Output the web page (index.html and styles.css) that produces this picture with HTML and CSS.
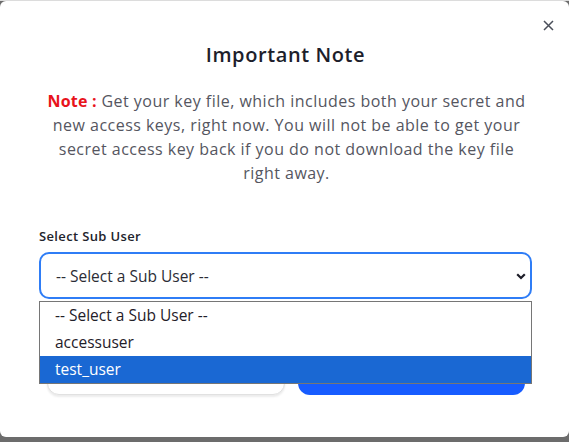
FILE: index.html
```html
<!DOCTYPE html>
<html>
<head>
<meta charset="utf-8">
<link rel="stylesheet" href="styles.css">
</head>
<body>
<div class="modal">
  <button class="close" aria-label="Close">
    <svg width="11" height="11" viewBox="0 0 11 11"><path d="M1 1L10 10M10 1L1 10" stroke="#4a4f5a" stroke-width="1.5" fill="none"/></svg>
  </button>
  <h2 class="title">Important Note</h2>
  <p class="note"><span class="note-label">Note :</span> Get your key file, which includes both your secret and new access keys, right now. You will not be able to get your secret access key back if you do not download the key file right away.</p>
  <label class="field-label">Select Sub User</label>
  <div class="select">
    <span>-- Select a Sub User --</span>
    <svg class="chev" width="10" height="7" viewBox="0 0 10 7"><path d="M1.2 1.2L5 5L8.8 1.2" stroke="#1d1d28" stroke-width="2.2" fill="none"/></svg>
  </div>
  <div class="actions">
    <button class="btn btn-outline">Cancel</button>
    <button class="btn btn-primary">Download</button>
  </div>
  <ul class="dropdown">
    <li>-- Select a Sub User --</li>
    <li>accessuser</li>
    <li class="active">test_user</li>
  </ul>
</div>
</body>
</html>
```
FILE: styles.css
```css
html, body {
  margin: 0;
  padding: 0;
}
body {
  width: 569px;
  height: 442px;
  background: linear-gradient(#dcdcdc 0 1px, #6c6c6c 1px);
  font-family: "Open Sans", "Noto Sans", sans-serif;
  overflow: hidden;
}
.modal {
  position: relative;
  margin-top: 1px;
  height: 436px;
  background: #fff;
  border-radius: 6px;
  padding: 0 37px 0 39px;
  box-sizing: border-box;
  display: flex;
  flex-direction: column;
}
.close {
  position: absolute;
  top: 18px;
  right: 14px;
  width: 13px;
  height: 13px;
  padding: 1px;
  border: 0;
  background: none;
  display: flex;
  align-items: center;
  justify-content: center;
}
.title {
  margin: 39px 0 0;
  text-align: center;
  font-size: 20px;
  font-weight: 600;
  letter-spacing: 0.6px;
  line-height: 30px;
  color: #1d1e2b;
}
.note {
  margin: 19px -2px 0 0;
  padding: 0;
  text-align: center;
  font-size: 16px;
  letter-spacing: 0.48px;
  line-height: 24px;
  color: #55565f;
}
.note-label {
  color: #e8131b;
  font-weight: 700;
  letter-spacing: 0.2px;
}
.field-label {
  margin-top: 42px;
  font-size: 13px;
  font-weight: 600;
  letter-spacing: 0.35px;
  line-height: 18px;
  color: #22232b;
}
.select {
  margin-top: 7px;
  height: 47px;
  box-sizing: border-box;
  border: 2px solid #2f7df6;
  border-radius: 10px;
  display: flex;
  align-items: center;
  justify-content: space-between;
  padding: 0 4px 0 15px;
  font-size: 15.5px;
  color: #2b2c35;
}
.chev {
  margin-top: 1px;
}
.actions {
  margin: 52px 7px 0 8px;
  display: flex;
  gap: 13px;
}
.btn {
  height: 44px;
  border-radius: 12px;
  font-family: inherit;
  font-size: 15px;
  font-weight: 600;
}
.btn-outline {
  width: 238px;
  background: #fff;
  border: 1px solid #e1e1e1;
  box-shadow: 0 2px 2px rgba(0,0,0,0.08);
  color: #333;
}
.btn-primary {
  flex: 1;
  background: #175cff;
  border: 0;
  color: #fff;
}
.dropdown {
  position: absolute;
  top: 300px;
  left: 39px;
  width: 493px;
  margin: 0;
  padding: 0;
  list-style: none;
  background: #fff;
  border: 1px solid #767676;
  box-sizing: border-box;
  font-size: 15.5px;
  color: #1f2029;
}
.dropdown li {
  height: 27px;
  line-height: 27px;
  padding-left: 15px;
}
.dropdown li.active {
  background: #1a68d3;
  color: #fff;
}
```
